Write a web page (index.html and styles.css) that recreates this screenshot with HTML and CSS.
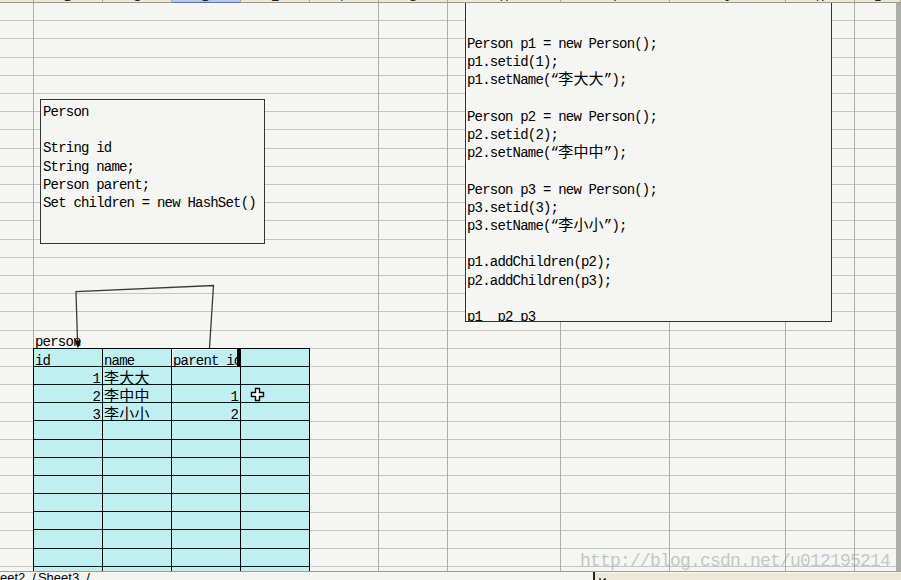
FILE: index.html
```html
<!DOCTYPE html>
<html lang="zh-CN">
<head>
  <meta charset="UTF-8">
  <meta name="viewport" content="width=device-width, initial-scale=1.0">
  <title>Person 自关联表</title>
  <link rel="stylesheet" href="styles.css">
</head>
<body>
  <div class="book">
    <!-- 列标题（只露出底部一点） -->
    <div class="colheads">
      <div class="ch"></div>
      <div class="ch">B</div>
      <div class="ch">C</div>
      <div class="ch on">D</div>
      <div class="ch">E</div>
      <div class="ch">F</div>
      <div class="ch">G</div>
      <div class="ch">H</div>
      <div class="ch">I</div>
      <div class="ch">J</div>
      <div class="ch">K</div>
      <div class="ch">L</div>
    </div>

    <div class="sheet">
      <!-- 网格竖线 -->
      <div class="col"></div>
      <div class="col"></div>
      <div class="col"></div>
      <div class="col"></div>
      <div class="col"></div>
      <div class="col"></div>
      <div class="col"></div>
      <div class="col"></div>
      <div class="col"></div>
      <div class="col"></div>
      <div class="col"></div>
      <div class="col"></div>

      <div class="label">person</div>

      <!-- person 表 -->
      <div class="tbl">
        <div class="cell">id</div>
        <div class="cell">name</div>
        <div class="cell sel">parent id</div>
        <div class="cell"></div>

        <div class="cell num">1</div>
        <div class="cell"><span class="cn">李大大</span></div>
        <div class="cell"></div>
        <div class="cell"></div>

        <div class="cell num">2</div>
        <div class="cell"><span class="cn">李中中</span></div>
        <div class="cell num">1</div>
        <div class="cell"></div>

        <div class="cell num">3</div>
        <div class="cell"><span class="cn">李小小</span></div>
        <div class="cell num">2</div>
        <div class="cell"></div>

        <div class="cell"></div><div class="cell"></div><div class="cell"></div><div class="cell"></div>
        <div class="cell"></div><div class="cell"></div><div class="cell"></div><div class="cell"></div>
        <div class="cell"></div><div class="cell"></div><div class="cell"></div><div class="cell"></div>
        <div class="cell"></div><div class="cell"></div><div class="cell"></div><div class="cell"></div>
        <div class="cell"></div><div class="cell"></div><div class="cell"></div><div class="cell"></div>
        <div class="cell"></div><div class="cell"></div><div class="cell"></div><div class="cell"></div>
        <div class="cell"></div><div class="cell"></div><div class="cell"></div><div class="cell"></div>
        <div class="cell"></div><div class="cell"></div><div class="cell"></div><div class="cell"></div>
        <div class="cell"></div><div class="cell"></div><div class="cell"></div><div class="cell"></div>
      </div>

      <!-- 文本框 -->
      <div class="textbox box-class">Person

String id
String name;
Person parent;
Set children = new HashSet()</div>

      <div class="textbox box-code">Person p1 = new Person();
p1.setid(1);
p1.setName(“<span class="cn">李大大</span>”);

Person p2 = new Person();
p2.setid(2);
p2.setName(“<span class="cn">李中中</span>”);

Person p3 = new Person();
p3.setid(3);
p3.setName(“<span class="cn">李小小</span>”);

p1.addChildren(p2);
p2.addChildren(p3);

p1  p2 p3</div>

      <!-- parent id -> person 的连接线 -->
      <svg class="links" width="320" height="360" viewBox="0 0 320 360">
        <polyline points="209.5,345 213.5,282.5 76,288.5 77.5,338" fill="none" stroke="#3a3a3a" stroke-width="1.3"/>
        <polygon points="74.5,337.5 81,337.5 78,345.5" fill="#111"/>
      </svg>

      <!-- 鼠标十字光标 -->
      <svg class="cursor" width="15" height="15" viewBox="0 0 15 15">
        <path d="M5.5 1.5h4v4h4v4h-4v4h-4v-4h-4v-4h4z" fill="#fff" stroke="#000" stroke-width="1.4"/>
      </svg>
    </div>

    <div class="tabbar">
      <div class="tabs">
        <span class="tab">eet2</span><span class="sep">/</span><span class="tab">Sheet3</span><span class="sep">/</span>
      </div>
      <div class="split"></div>
      <div class="hscroll">
        <svg class="arrow" width="8" height="8" viewBox="0 0 8 8"><path d="M1 0v8M6 1l-4 3 4 3z" stroke="#000" stroke-width="1.2" fill="#000"/></svg>
      </div>
    </div>

    <div class="watermark">http://blog.csdn.net/u012195214</div>
  </div>
</body>
</html>
```

FILE: styles.css
```css
* {
  margin: 0;
  padding: 0;
  box-sizing: border-box;
}

body {
  background-color: #f5f5f3;
  overflow: hidden;
}

.book {
  --cols: 34px repeat(6, 69px) 113px 109px 116px 69px 1fr;
  position: relative;
  width: 901px;
  height: 580px;
  overflow: hidden;
  font-family: "Liberation Mono", "Noto Sans CJK SC", monospace;
  font-size: 14px;
  letter-spacing: -0.8px;
  color: #000;
}

/* 列标题 */
.colheads {
  display: grid;
  grid-template-columns: var(--cols);
  height: 3px;
  overflow: hidden;
  background-color: #ece9d8;
}

.ch {
  height: 12px;
  margin-top: -9px;
  border-right: 1px solid #aca899;
  border-bottom: 1px solid #9a9788;
  font: 12px/12px "Liberation Sans", sans-serif;
  letter-spacing: 0;
  text-align: center;
  color: #222;
}

.ch.on {
  background-color: #b6c9e9;
  border-bottom-color: #4a76c4;
}

/* 工作表 */
.sheet {
  position: relative;
  display: grid;
  grid-template-columns: var(--cols);
  grid-template-rows: repeat(32, 18.2px);
  height: 568px;
  overflow: hidden;
  background: repeating-linear-gradient(to bottom, transparent 0, transparent 17.2px, #c5c5c3 17.2px, #c5c5c3 18.2px);
}

.col {
  grid-row: 1 / -1;
  border-right: 1px solid #adadab;
}

.label {
  grid-column: 2;
  grid-row: 19;
  padding: 3px 0 0 1px;
  line-height: 18.2px;
  white-space: nowrap;
}

.tbl {
  grid-column: 2 / 6;
  grid-row: 20 / -1;
  margin: -1px 0 0 -1px;
  display: grid;
  grid-template-columns: repeat(4, 69px);
  grid-auto-rows: 18.2px;
  border-left: 1px solid #000;
  border-top: 1px solid #000;
}

.cell {
  padding: 3px 1px 0 1px;
  line-height: 18.2px;
  white-space: nowrap;
  overflow: hidden;
  background-color: #c0eff2;
  border-right: 1px solid #000;
  border-bottom: 1px solid #111;
}

.cell.num {
  text-align: right;
  padding-right: 2px;
}

.cell.sel {
  position: relative;
  text-decoration: underline;
  box-shadow: inset 1px 1px 0 #fff, inset -1px -1px 0 #fff;
}

.cell.sel::after {
  content: "";
  position: absolute;
  top: 0;
  right: 0;
  bottom: 0;
  width: 3px;
  background-color: #000;
}

.cn {
  font-size: 15px;
  letter-spacing: 0.2px;
  line-height: 17px;
}

/* 浮动文本框 */
.textbox {
  position: absolute;
  white-space: pre;
  overflow: hidden;
  line-height: 18.2px;
  background-color: #f5f5f3;
  border: 1px solid #333;
}

.box-class {
  left: 40px;
  top: 96px;
  width: 225px;
  height: 145px;
  padding: 3px 0 0 2px;
}

.box-code {
  left: 465px;
  top: -8px;
  width: 367px;
  height: 327px;
  padding: 39px 0 0 1px;
}

.links {
  position: absolute;
  left: 0;
  top: 0;
}

.cursor {
  position: absolute;
  left: 250px;
  top: 384px;
}

/* 底部工作表标签 */
.tabbar {
  display: flex;
  height: 9px;
  border-top: 1px solid #9c9c98;
  background-color: #ece9d8;
  overflow: hidden;
}

.tabs {
  width: 593px;
  font: 13px/12px "Liberation Sans", sans-serif;
  letter-spacing: 0;
  white-space: nowrap;
  background-color: #f4f4f1;
}

.sep {
  margin: 0 2px 0 7px;
}

.split {
  width: 4px;
  border-left: 2px solid #222;
}

.hscroll {
  flex: 1;
  padding: 1px 0 0 2px;
  border-top: 1px solid #f8f8f4;
}

.watermark {
  position: absolute;
  left: 580px;
  top: 551px;
  font-size: 18px;
  line-height: 20px;
  letter-spacing: -0.8px;
  color: rgba(150, 150, 150, 0.5);
  white-space: nowrap;
}
```
